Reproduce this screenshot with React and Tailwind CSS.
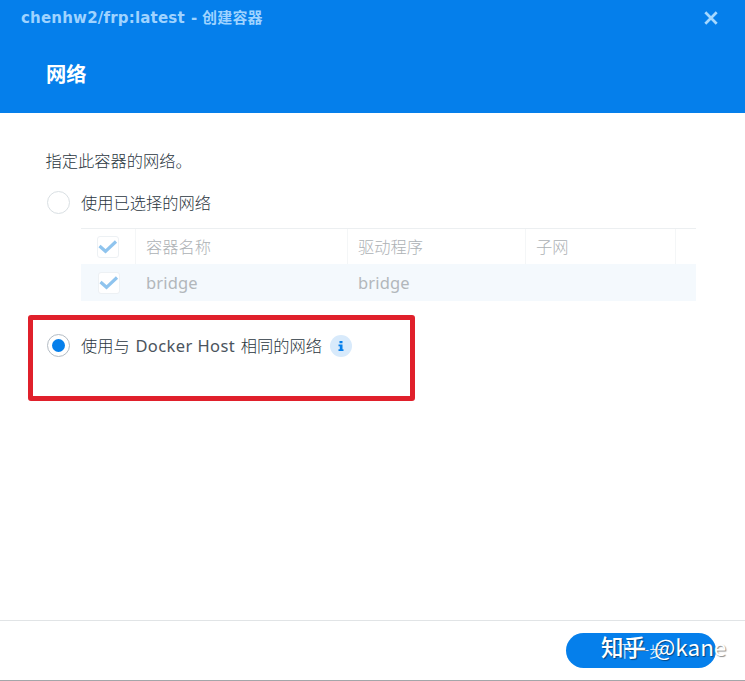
import { useState } from 'react';

const redes = [{ nome: 'bridge', driver: 'bridge', subnet: '' }];

function Radio({ checked, onClick }) {
  return (
    <button
      type="button"
      role="radio"
      aria-checked={checked}
      onClick={onClick}
      className={`flex h-[23px] w-[23px] shrink-0 items-center justify-center rounded-full border bg-white ${
        checked ? 'border-[#b4bcc4]' : 'border-[#d9dfe3]'
      }`}
    >
      {checked && <span className="h-[13px] w-[13px] rounded-full bg-[#057feb]" />}
    </button>
  );
}

function Check() {
  return (
    <span className="flex h-[22px] w-[22px] items-center justify-center rounded-[3px] border border-[#edf1f4] bg-white">
      <svg width="20" height="16" viewBox="0 0 20 16" fill="none" className="shrink-0">
        <path d="M1.5 7 L7.5 12.3 L18 2.5" stroke="#8fc4ee" strokeWidth="3.2" />
      </svg>
    </span>
  );
}

export default function App() {
  const [modo, setModo] = useState('host');

  return (
    <div className="flex h-[681px] w-[745px] flex-col overflow-hidden border-b border-[#a3a6a9] bg-white font-['Noto_Sans','Noto_Sans_CJK_SC',sans-serif] text-[16.25px] leading-6 font-light text-[#2b3640]">
      <header className="h-[113px] shrink-0 bg-[#057feb]">
        <div className="flex h-9 items-center justify-between pr-[27px] pl-[21px]">
          <span className="flex items-center font-['DejaVu_Sans','Noto_Sans_CJK_SC',sans-serif] text-[15px] font-bold whitespace-nowrap text-[#9fd3ff]">
            <span className="w-[165px] text-[15px] tracking-[0.2px]">chenhw2/frp:latest</span>
            <span className="w-[16px] text-center">-</span>
            <span className="tracking-[0.2px]">创建容器</span>
          </span>
          <button type="button" aria-label="关闭">
            <svg width="14" height="14" viewBox="0 0 14 14" fill="none">
              <path d="M1.3 1.3 L12.7 12.7 M12.7 1.3 L1.3 12.7" stroke="#a5d8ff" strokeWidth="2.7" />
            </svg>
          </button>
        </div>
        <h1 className="mt-[22px] ml-[46px] text-[20.3px] leading-8 font-bold text-white">网络</h1>
      </header>

      <main className="flex-1 pt-9 pr-[49px] pl-[45.5px]">
        <p>指定此容器的网络。</p>

        <div className="mt-[17px] mb-px ml-[1.5px] flex h-6 items-center gap-[11px]">
          <Radio checked={modo === 'bridge'} onClick={() => setModo('bridge')} />
          <span className="pt-px">使用已选择的网络</span>
        </div>

        <div className="mt-[14px] ml-[35.5px] border-t border-[#eceff1] text-[#adb1b5]">
          <div className="grid h-[35px] grid-cols-[55px_212px_178px_150px_1fr]">
            <div className="flex items-center justify-center border-r border-[#f4f6f7]"><Check /></div>
            <div className="flex items-center border-r border-[#f4f6f7] pl-[10px]">容器名称</div>
            <div className="flex items-center border-r border-[#f4f6f7] pl-[10px]">驱动程序</div>
            <div className="flex items-center border-r border-[#f4f6f7] pl-[10px]">子网</div>
          </div>
          {redes.map((rede) => (
            <div
              key={rede.nome}
              className="grid h-[37px] grid-cols-[55px_212px_178px_150px_1fr] bg-[#f4f9fd] text-[16.5px] font-normal tracking-[0.15px] text-[#b2b7bb]"
            >
              <div className="flex items-center justify-center"><Check /></div>
              <div className="flex items-center pl-[10px]">{rede.nome}</div>
              <div className="flex items-center pl-[10px]">{rede.driver}</div>
              <div className="flex items-center pl-[10px]">{rede.subnet}</div>
            </div>
          ))}
        </div>

        <div className="mt-[14px] -ml-[17.5px] h-[86px] w-[387px] rounded-[3px] border-[5px] border-[#e0202b] pt-[14px] pl-[14px]">
          <div className="flex h-[23px] items-center">
            <Radio checked={modo === 'host'} onClick={() => setModo('host')} />
            <span className="ml-[11px] flex whitespace-nowrap">
              使用与
              <span className="w-[111px] text-center text-[16.5px] font-normal tracking-[0.4px] text-[#4b545d]">Docker Host</span>
              相同的网络
            </span>
            <span className="ml-2 flex h-[22px] w-[22px] items-center justify-center rounded-full bg-[#d8eafb]">
              <svg width="8" height="12" viewBox="0 0 8 12" fill="#057feb">
                <path d="M2.5 1h3v2.2h-3z M1.5 4.5h4v4.7h1V11h-5V9.2h1.3V6.3H1.5z" />
              </svg>
            </span>
          </div>
        </div>
      </main>

      <footer className="flex h-[60px] shrink-0 justify-end border-t border-[#e1e4e6] pt-3 pr-[29px]">
        <button type="button" className="relative h-[35px] w-[150px] rounded-full bg-[#057feb] text-base font-light text-white">
          下一步
          <span className="absolute -top-0.5 left-[35px] flex font-['Noto_Sans_CJK_SC',sans-serif] text-[22.5px] leading-[30px] font-normal whitespace-nowrap text-white [text-shadow:1px_1px_1px_rgba(0,0,0,0.45)]">
            <span className="w-[53px] text-left font-medium">知乎</span>
            <span>@kane</span>
          </span>
        </button>
      </footer>
    </div>
  );
}
